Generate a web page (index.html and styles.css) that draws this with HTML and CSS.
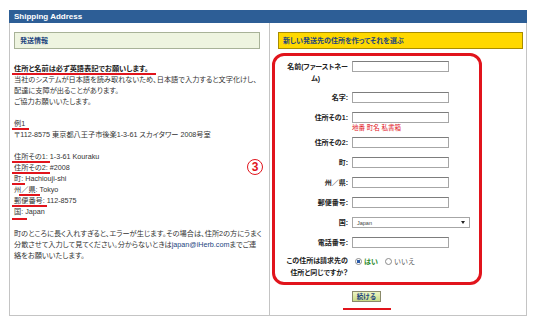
FILE: index.html
```html
<!DOCTYPE html>
<html lang="ja">
<head>
  <meta charset="UTF-8" />
  <title>Shipping Address</title>
  <link rel="stylesheet" href="styles.css">
</head>
<body>
  <div class="panel">
    <div class="panel-head">Shipping Address</div>
    <div class="cols">
      <div class="col col-info">
        <div class="box-title box-green">発送情報</div>
        <div class="info">
          <p><b class="mark mark-long">住所と名前は必ず英語表記でお願いします。</b><br>
          当社のシステムが日本語を読み取れないため、日本語で入力すると文字化けし、<br>
          配達に支障が出ることがあります。<br>
          ご協力お願いいたします。</p>
          <p><span class="mark">例1</span><br>
          〒112-8575 東京都八王子市後楽1-3-61 スカイタワー 2008号室</p>
          <p><span class="mark">住所その1</span>: 1-3-61 Kouraku<br>
          <span class="mark">住所その2</span>: #2008<br>
          <span class="mark">町</span>: Hachiouji-shi<br>
          州<span class="mark">／県</span>: Tokyo<br>
          <span class="mark">郵便番号</span>: 112-8575<br>
          <span class="mark mark-low">国</span>: Japan</p>
          <p>町のところに長く入れすぎると、エラーが生じます。その場合は、住所2の方にうまく<br>
          分散させて入力して見てください。分からないときは<a class="mail">japan@iHerb.com</a>までご連<br>
          絡をお願いいたします。</p>
        </div>
        <span class="step">3</span>
      </div>

      <div class="col col-form">
        <div class="box-title box-yellow">新しい発送先の住所を作ってそれを選ぶ</div>
        <div class="form-box">
          <div class="row row-tall">
            <label>名前(ファーストネー<br><span class="wrap">ム)</span></label>
            <input type="text">
          </div>
          <div class="row">
            <label>名字:</label>
            <input type="text">
          </div>
          <div class="row row-hint">
            <label>住所その1:</label>
            <div>
              <input type="text">
              <div class="hint">地番 町名 私書箱</div>
            </div>
          </div>
          <div class="row">
            <label>住所その2:</label>
            <input type="text">
          </div>
          <div class="row">
            <label>町:</label>
            <input type="text">
          </div>
          <div class="row">
            <label>州／県:</label>
            <input type="text">
          </div>
          <div class="row">
            <label>郵便番号:</label>
            <input type="text">
          </div>
          <div class="row">
            <label>国:</label>
            <div class="select"><span>Japan</span><span class="arrow"></span></div>
          </div>
          <div class="row">
            <label>電話番号:</label>
            <input type="text">
          </div>
          <div class="row row-last">
            <label>この住所は請求先の<br>住所と同じですか？</label>
            <div class="choice">
              <span class="radio checked"></span><span class="yes">はい</span>
              <span class="radio"></span><span class="no">いいえ</span>
            </div>
          </div>
        </div>
        <button class="btn">続ける</button>
        <div class="btn-mark"></div>
      </div>
    </div>
  </div>
</body>
</html>
```

FILE: styles.css
```css
body {
  margin: 0;
  padding: 10px 0 0 9px;
  background: #fff;
  font-family: "Liberation Sans", "Noto Sans CJK JP", sans-serif;
  font-size: 7px;
  color: #333;
}

.panel {
  width: 518px;
}

.panel-head {
  height: 13px;
  line-height: 13px;
  padding-left: 5px;
  background: #2d5e96;
  color: #fff;
  font-size: 8px;
  font-weight: bold;
}

.cols {
  display: grid;
  grid-template-columns: 261px 257px;
}

.col {
  box-sizing: border-box;
  border-right: 1px solid #c4c4c4;
  border-bottom: 1px solid #c4c4c4;
}

.col-info {
  position: relative;
  border-left: 1px solid #c4c4c4;
  padding: 9px 0 0 4px;
}

.col-form {
  padding: 9px 0 5px 0;
}

/* section titles */
.box-title {
  box-sizing: border-box;
  height: 17px;
  line-height: 15px;
  font-weight: bold;
  color: #23457e;
  font-feature-settings: "palt";
}

.box-green {
  width: 246px;
  padding-left: 5px;
  background: #eef4e0;
  border: 1px solid #a8b298;
}

.box-yellow {
  width: 245px;
  margin-left: 8px;
  padding-left: 4px;
  background: #ffd800;
  border: 1px solid #a88c00;
}

/* left text */
.info {
  margin-top: 14px;
  font-size: 7.2px;
  line-height: 11px;
  white-space: nowrap;
  font-feature-settings: "palt";
}

.info p {
  margin: 0 0 11px;
}

.info b {
  color: #222;
}

.mail {
  color: #23457e;
}

.mark {
  position: relative;
}

.mark::after {
  content: '';
  position: absolute;
  left: -2px;
  right: -4px;
  bottom: -2px;
  height: 2px;
  background: #e1141c;
}

.mark-long::after {
  right: -8px;
}

.mark-low::after {
  bottom: -4px;
  right: -6px;
}

.step {
  position: absolute;
  left: 237px;
  top: 136px;
  width: 14px;
  height: 14px;
  border: 1.5px solid #e1141c;
  border-radius: 50%;
  color: #e1141c;
  font-size: 12px;
  font-weight: bold;
  line-height: 14px;
  text-align: center;
}

/* form */
.form-box {
  box-sizing: border-box;
  width: 210px;
  margin: 4px 0 0 2px;
  padding: 5px 0 3px 5px;
  border: 3px solid #e1141c;
  border-radius: 12px;
}

.row {
  display: grid;
  grid-template-columns: 68px 120px;
  column-gap: 4px;
  align-items: start;
  padding-bottom: 8px;
}

.row label {
  text-align: right;
  font-weight: bold;
  line-height: 12px;
  color: #222;
  white-space: nowrap;
  font-feature-settings: "palt";
}

.row-tall label {
  line-height: 11.5px;
}

.row-tall .wrap {
  margin-right: 28px;
}

.row-hint {
  padding-bottom: 5px;
}

.row-last {
  margin-top: -2px;
  padding-bottom: 0;
}

.row input {
  display: block;
  box-sizing: border-box;
  width: 97px;
  height: 11px;
  margin: 0;
  padding: 0;
  border: 1px solid #a6a6a6;
  border-top-color: #7d7d7d;
  background: #fff;
}

.hint {
  line-height: 9px;
  color: #e1141c;
  font-size: 6.5px;
}

.select {
  box-sizing: border-box;
  width: 118px;
  height: 11px;
  padding: 0 4px;
  border: 1px solid #a6a6a6;
  display: flex;
  justify-content: space-between;
  align-items: center;
  font-size: 5.5px;
  color: #444;
}

.arrow {
  width: 0;
  height: 0;
  border-left: 2px solid transparent;
  border-right: 2px solid transparent;
  border-top: 3px solid #222;
}

.choice {
  display: flex;
  align-items: center;
  height: 12px;
  font-weight: bold;
}

.radio {
  box-sizing: border-box;
  width: 7px;
  height: 7px;
  margin: 0 2px 0 3px;
  border: 1px solid #8a8a8a;
  border-radius: 50%;
  background: #fff;
}

.radio.checked {
  background: radial-gradient(circle, #2b5aa8 0 1.6px, #fff 2px);
}

.yes {
  color: #2e8b2e;
  margin-right: 4px;
}

.no {
  color: #555;
  font-weight: normal;
}

.btn {
  display: block;
  width: 29px;
  height: 11px;
  margin: 6px 0 0 82px;
  padding: 0;
  border: 1px solid #8a8a6a;
  background: linear-gradient(#eef5c4, #c9dc86);
  color: #23457e;
  font-family: inherit;
  font-size: 6.5px;
  font-weight: bold;
  line-height: 9px;
}

.btn-mark {
  width: 48px;
  height: 2px;
  margin: 6px 0 0 73px;
  background: #e1141c;
}
```
